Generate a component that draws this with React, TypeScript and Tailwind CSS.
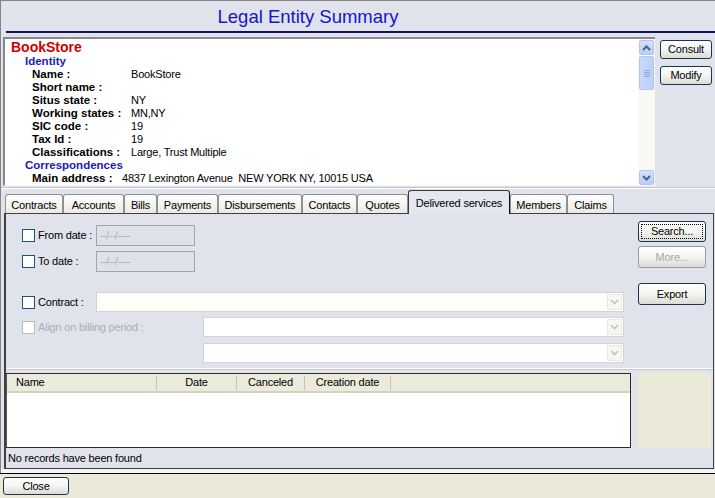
import React from 'react';

function Btn({
  children,
  className = '',
  disabled = false,
  focus = false,
}: {
  children: React.ReactNode;
  className?: string;
  disabled?: boolean;
  focus?: boolean;
}) {
  return (
    <div
      className={`flex items-center justify-center rounded-[3px] border bg-linear-to-b from-white via-[#f4f4f1] to-[#dcdcd5] text-[11px] tracking-[-0.2px] ${
        disabled ? 'border-[#8e9db2] text-[#a6a6a6]' : 'border-[#1d3350] text-black'
      } ${className}`}
    >
      {focus ? (
        <div className="flex h-[15px] w-[62px] items-center justify-center border border-dotted border-black">
          {children}
        </div>
      ) : (
        children
      )}
    </div>
  );
}

function Check({ disabled = false }: { disabled?: boolean }) {
  return (
    <div
      className={`h-[13px] w-[13px] shrink-0 border bg-white ${
        disabled ? 'border-[#b3bac6]' : 'border-[#1c5180]'
      }`}
    />
  );
}

function Chevron() {
  return (
    <div className="flex h-[16px] w-[15px] items-center justify-center border border-[#e8e8e4] bg-[#f6f6f3]">
      <svg width="9" height="6" viewBox="0 0 9 6">
        <path d="M1 1 L4.5 4.5 L8 1" fill="none" stroke="#c3c3be" strokeWidth="1.6" />
      </svg>
    </div>
  );
}

function Combo({ className }: { className: string }) {
  return (
    <div className={`flex h-[20px] items-center justify-end border border-[#d2d3d3] pr-[1px] ${className}`}>
      <Chevron />
    </div>
  );
}

function ScrollBtn({ up }: { up: boolean }) {
  return (
    <div className="flex h-[15px] w-[15px] items-center justify-center rounded-[2px] border border-[#b3c6f0] bg-linear-to-b from-[#d4e0fc] to-[#b9cdf8]">
      <svg width="9" height="6" viewBox="0 0 9 6">
        <path
          d={up ? 'M1 5 L4.5 1.5 L8 5' : 'M1 1 L4.5 4.5 L8 1'}
          fill="none"
          stroke="#4d6185"
          strokeWidth="2"
        />
      </svg>
    </div>
  );
}

const tabs: { label: string; w: string; selected?: boolean }[] = [
  { label: 'Contracts', w: 'w-[58px]' },
  { label: 'Accounts', w: 'w-[61px]' },
  { label: 'Bills', w: 'w-[33px]' },
  { label: 'Payments', w: 'w-[61px]' },
  { label: 'Disbursements', w: 'w-[84px]' },
  { label: 'Contacts', w: 'w-[55px]' },
  { label: 'Quotes', w: 'w-[51px]' },
  { label: 'Delivered services', w: 'w-[102px]', selected: true },
  { label: 'Members', w: 'w-[57px]' },
  { label: 'Claims', w: 'w-[47px]' },
];

const info: [string, string][] = [
  ['Name :', 'BookStore'],
  ['Short name :', ''],
  ['Situs state :', 'NY'],
  ['Working states :', 'MN,NY'],
  ['SIC code :', '19'],
  ['Tax Id :', '19'],
  ['Classifications :', 'Large, Trust Multiple'],
];

export default function App() {
  return (
    <div className="flex h-[498px] w-[715px] flex-col overflow-hidden bg-[#e0e3ec] font-['Liberation_Sans',Arial,sans-serif] text-black">
      <div className="flex flex-col border-l border-t border-[#858585]">
        {/* Title */}
        <div className="flex h-[30px] items-center">
          <div className="w-[614px] pt-[2px] text-center text-[18.5px] leading-none text-[#1515c9]">
            Legal Entity Summary
          </div>
        </div>
        <div className="ml-[5px] h-[2px] bg-[#12125e]" />
        <div className="h-[4px]" />

        {/* Info area */}
        <div className="flex h-[149px]">
          <div className="ml-[2px] flex w-[652px] border-l-2 border-t-2 border-b border-[#8a8a8a] border-b-[#f6f7fa]">
            <div className="flex-1 overflow-hidden bg-white pl-[6px]">
              <div className="h-[16px] text-[14px] font-bold leading-[16px] text-[#d00000]">BookStore</div>
              <div className="h-[13px] pl-[14px] text-[11.5px] font-bold leading-[13px] text-[#1a1ab8]">
                Identity
              </div>
              {info.map(([k, v]) => (
                <div key={k} className="flex h-[13px] items-center pl-[21px] leading-[13px]">
                  <div className="w-[99px] shrink-0 text-[11.5px] font-bold">{k}</div>
                  <div className="text-[11px] tracking-[-0.2px]">{v}</div>
                </div>
              ))}
              <div className="h-[13px] pl-[14px] text-[11.5px] font-bold leading-[13px] text-[#1a1ab8]">
                Correspondences
              </div>
              <div className="flex h-[13px] items-center whitespace-pre pl-[21px] leading-[13px]">
                <div className="w-[90px] shrink-0 text-[11.5px] font-bold">Main address :</div>
                <div className="text-[11px] tracking-[-0.2px]">4837 Lexington Avenue  NEW YORK NY, 10015 USA</div>
              </div>
            </div>
            <div className="flex w-[17px] flex-col items-center bg-[#f8f8f4] pt-[1px]">
              <ScrollBtn up />
              <div className="mt-[1px] flex h-[34px] w-[15px] flex-col items-center justify-center gap-[1px] rounded-[2px] border border-[#b3c6f0] bg-linear-to-r from-[#c9d8fb] to-[#bcd0f9]">
                <div className="h-px w-[6px] bg-[#8ea7df]" />
                <div className="h-px w-[6px] bg-[#8ea7df]" />
                <div className="h-px w-[6px] bg-[#8ea7df]" />
                <div className="h-px w-[6px] bg-[#8ea7df]" />
              </div>
              <div className="flex-1" />
              <ScrollBtn up={false} />
            </div>
          </div>
          <div className="ml-[5px] flex flex-col pt-[3px]">
            <Btn className="h-[19px] w-[52px]">Consult</Btn>
            <Btn className="mt-[7px] h-[19px] w-[52px]">Modify</Btn>
          </div>
        </div>

        {/* separator */}
        <div className="h-[4px] pt-[1px]">
          <div className="h-px bg-[#c4c8d0]" />
          <div className="h-px bg-white" />
        </div>

        {/* Tabs */}
        <div className="flex h-[23px] items-end pl-[4px]">
          {tabs.map((t) =>
            t.selected ? (
              <div
                key={t.label}
                className={`relative z-10 -mb-px flex h-[24px] ${t.w} shrink-0 items-start justify-center rounded-t-[3px] border border-b-0 border-[#3a3a3a] border-r-[#111] bg-[#e4e7ef] pt-[4px] text-[11px] tracking-[-0.2px]`}
              >
                {t.label}
              </div>
            ) : (
              <div
                key={t.label}
                className={`flex h-[19px] ${t.w} shrink-0 items-center justify-center rounded-t-[3px] border border-b-0 border-[#8b9095] bg-linear-to-b from-white to-[#ebeae4] pt-[2px] text-[11px] tracking-[-0.2px]`}
              >
                {t.label}
              </div>
            )
          )}
        </div>

        {/* Tab panel */}
        <div className="ml-[3px] flex h-[256px] w-[710px] flex-col border border-l-2 border-[#404040]">
          <div className="flex h-[154px]">
            <div className="flex w-[632px] flex-col pt-[11px] text-[11px] tracking-[-0.2px]">
              <div className="flex h-[21px] items-center">
                <div className="ml-[16px] flex w-[74px] items-center gap-[3px]">
                  <Check />
                  <span>From date :</span>
                </div>
                <div className="flex h-[21px] w-[99px] items-center border border-[#9ea6b2] bg-[#dde1ea] pl-[3px] text-[10px] text-[#a8acb4]">
                  --/--/----
                </div>
              </div>
              <div className="mt-[5px] flex h-[21px] items-center">
                <div className="ml-[16px] flex w-[74px] items-center gap-[3px]">
                  <Check />
                  <span>To date :</span>
                </div>
                <div className="flex h-[21px] w-[99px] items-center border border-[#9ea6b2] bg-[#dde1ea] pl-[3px] text-[10px] text-[#a8acb4]">
                  --/--/----
                </div>
              </div>
              <div className="mt-[20px] flex h-[20px] items-center">
                <div className="ml-[16px] flex w-[74px] items-center gap-[3px]">
                  <Check />
                  <span>Contract :</span>
                </div>
                <Combo className="w-[528px] bg-[#fffffa]" />
              </div>
              <div className="mt-[5px] flex h-[20px] items-center">
                <div className="ml-[16px] flex w-[181px] items-center gap-[3px] text-[#a9adb5]">
                  <Check disabled />
                  <span>Align on billing period :</span>
                </div>
                <Combo className="w-[421px] bg-white" />
              </div>
              <div className="mt-[6px] flex h-[20px] items-center">
                <div className="ml-[197px]" />
                <Combo className="w-[421px] bg-white" />
              </div>
            </div>
            <div className="flex flex-col pt-[7px]">
              <Btn className="h-[21px] w-[68px]" focus>
                Search...
              </Btn>
              <Btn className="mt-[4px] h-[22px] w-[68px]" disabled>
                More...
              </Btn>
              <Btn className="mt-[15px] h-[22px] w-[68px]">Export</Btn>
            </div>
          </div>
          <div className="h-px bg-white" />
          <div className="h-px bg-[#c6cad3]" />
          <div className="h-[3px]" />
          <div className="flex h-[75px]">
            <div className="flex w-[625px] flex-col border border-[#2a2a2a] border-l-[#555] bg-white">
              <div className="flex h-[19px] items-center border-b-2 border-[#d6d2c2] bg-[#ebeadb] text-[11px] tracking-[-0.2px]">
                <div className="w-[149px] pl-[9px]">Name</div>
                <div className="h-[14px] w-px bg-[#c9c6b4]" />
                <div className="w-[79px] text-center">Date</div>
                <div className="h-[14px] w-px bg-[#c9c6b4]" />
                <div className="w-[67px] text-center">Canceled</div>
                <div className="h-[14px] w-px bg-[#c9c6b4]" />
                <div className="w-[85px] text-center">Creation date</div>
                <div className="h-[14px] w-px bg-[#c9c6b4]" />
              </div>
            </div>
            <div className="ml-[6px] w-[74px] bg-[#ebe9d8]" />
          </div>
          <div className="flex h-[20px] items-center pl-[2px] text-[11px] tracking-[-0.2px]">
            No records have been found
          </div>
        </div>
        <div className="h-[4px] bg-[#f3f4f6]" />
      </div>

      {/* Bottom bar */}
      <div className="h-px bg-black" />
      <div className="flex h-[24px] bg-[#ece9d8] pl-[3px] pt-[3px]">
        <Btn className="h-[18px] w-[66px]">Close</Btn>
      </div>
    </div>
  );
}
